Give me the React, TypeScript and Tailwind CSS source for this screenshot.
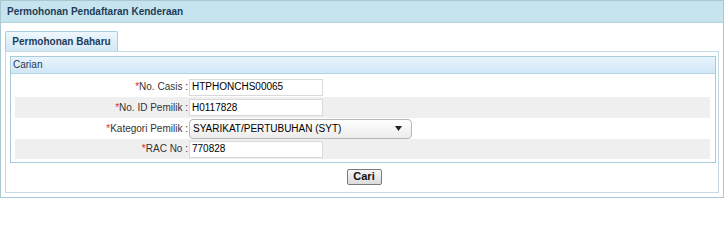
import React from 'react';

const rows = [
  { label: 'No. Casis', value: 'HTPHONCHS00065', kind: 'input', shade: false },
  { label: 'No. ID Pemilik', value: 'H0117828', kind: 'input', shade: true },
  { label: 'Kategori Pemilik', value: 'SYARIKAT/PERTUBUHAN (SYT)', kind: 'select', shade: false },
  { label: 'RAC No', value: '770828', kind: 'input', shade: true },
];

const App: React.FC = () => {
  return (
    <div className="w-[725px] h-[200px] overflow-hidden bg-white text-[10px] leading-[12px] text-[#222] font-['Liberation_Sans',Arial,sans-serif]">
      <div className="w-[724px] h-[198px] border border-[#a9c9d2] flex flex-col">
        {/* header */}
        <div className="h-[22px] shrink-0 bg-[#c6e4ed] border-b border-[#b3d3dc] pl-[6px] flex items-center font-bold text-[#1e3c5a]">
          Permohonan Pendaftaran Kenderaan
        </div>

        <div className="pl-[4px] pr-[4px] pt-[8px]">
          {/* tab */}
          <div className="w-[113px] h-[20px] whitespace-nowrap border border-b-0 border-[#a9cde2] rounded-t-[2px] bg-gradient-to-b from-[#eef7fd] to-[#d2e8f6] flex items-center justify-center font-bold text-[#1e3c5a]">
            Permohonan Baharu
          </div>

          {/* panel */}
          <div className="w-[714px] h-[142px] border border-[#c4dae4] pl-[4px] pr-[2px] pt-[4px] flex flex-col">
            <div className="border border-[#a9cbd9]">
              <div className="h-[17px] bg-gradient-to-b from-[#eaf5fd] to-[#cfe7f7] border-b border-[#b5d5e8] pl-[2px] flex items-center text-[#1d3a55]">
                Carian
              </div>
              <div className="pl-[4px] pr-[5px] pt-[3px] pb-[3px]">
                {rows.map((r, i) => (
                  <div
                    key={r.label}
                    className={`flex items-center whitespace-nowrap ${i === 0 || i === 3 ? 'h-[20px]' : 'h-[21px]'} ${r.shade ? 'bg-[#efefef]' : 'bg-white'}`}
                  >
                    <div className="w-[173px] text-right text-[#333]">
                      <span className="text-[#e81c1c]">*</span>
                      {r.label} :
                    </div>
                    <div className="ml-[1px]">
                      {r.kind === 'input' ? (
                        <div className="w-[134px] h-[17px] bg-white border border-[#d9d9d9] flex items-center pl-[2px] text-black">
                          {r.value}
                        </div>
                      ) : (
                        <div className="w-[223px] h-[20px] rounded-[4px] border border-[#b8b8b8] bg-gradient-to-b from-white to-[#ececec] flex items-center justify-between pl-[3px] pr-[9px] text-black">
                          <span>{r.value}</span>
                          <svg width="7" height="5" viewBox="0 0 7 5">
                            <path d="M0 0 H7 L3.5 5 Z" fill="#222" />
                          </svg>
                        </div>
                      )}
                    </div>
                  </div>
                ))}
              </div>
            </div>

            <div className="flex-1 flex items-center justify-center pl-[2px] pb-[2px]">
              <button className="w-[35px] h-[16px] border border-[#7a7a7a] rounded-[2px] bg-gradient-to-b from-[#f6f6f6] to-[#dcdcdc] text-[11px] font-bold text-[#111] leading-none">
                Cari
              </button>
            </div>
          </div>
        </div>
      </div>
    </div>
  );
};

export default App;
